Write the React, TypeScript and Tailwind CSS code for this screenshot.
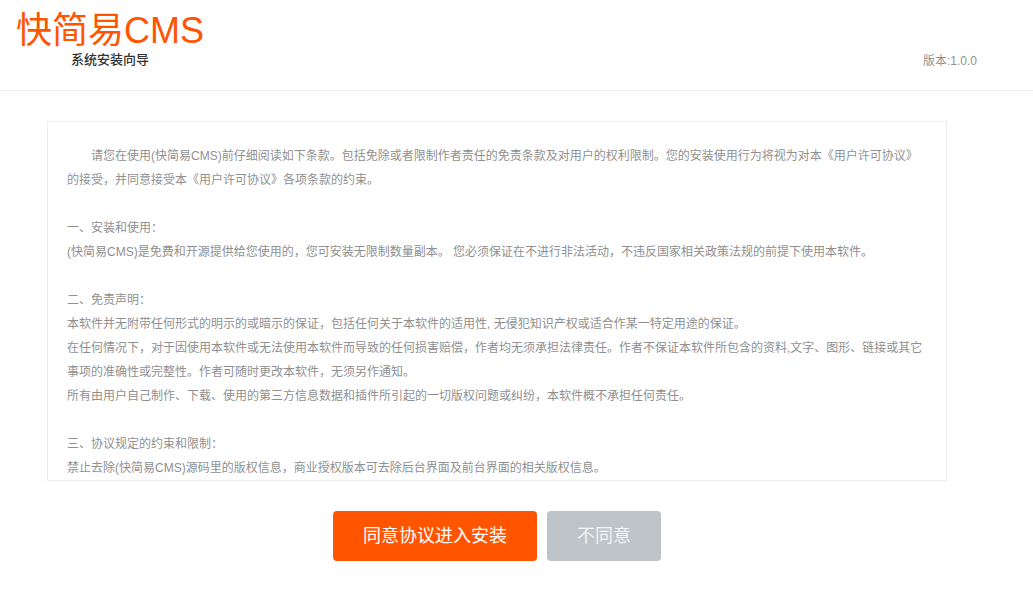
const fontStack = "font-['Liberation_Sans','Noto_Sans_CJK_SC',sans-serif]";

const agreement = [
  "请您在使用(快简易CMS)前仔细阅读如下条款。包括免除或者限制作者责任的免责条款及对用户的权利限制。您的安装使用行为将视为对本《用户许可协议》",
  "的接受，并同意接受本《用户许可协议》各项条款的约束。",
  "",
  "一、安装和使用：",
  "(快简易CMS)是免费和开源提供给您使用的，您可安装无限制数量副本。 您必须保证在不进行非法活动，不违反国家相关政策法规的前提下使用本软件。",
  "",
  "二、免责声明：",
  "本软件并无附带任何形式的明示的或暗示的保证，包括任何关于本软件的适用性, 无侵犯知识产权或适合作某一特定用途的保证。",
  "在任何情况下，对于因使用本软件或无法使用本软件而导致的任何损害赔偿，作者均无须承担法律责任。作者不保证本软件所包含的资料,文字、图形、链接或其它",
  "事项的准确性或完整性。作者可随时更改本软件，无须另作通知。",
  "所有由用户自己制作、下载、使用的第三方信息数据和插件所引起的一切版权问题或纠纷，本软件概不承担任何责任。",
  "",
  "三、协议规定的约束和限制：",
  "禁止去除(快简易CMS)源码里的版权信息，商业授权版本可去除后台界面及前台界面的相关版权信息。",
];

export default function App() {
  return (
    <div className={`min-h-[590px] bg-white ${fontStack}`}>
      {/* Header */}
      <header className="flex h-[91px] justify-between border-b border-[#eeeeee]">
        <div className="pl-[16px] pt-[9px]">
          <div className="text-[36px] leading-[43px] text-[#ff5500]">快简易CMS</div>
          <div className="pl-[55px] text-[13px] leading-[16px] font-medium text-[#333333]">系统安装向导</div>
        </div>
        <div className="pr-[56px] pt-[53px] text-[12px] leading-[16px] text-[#909090]">版本:1.0.0</div>
      </header>

      {/* Agreement */}
      <div className="mx-[47px] mt-[30px] h-[360px] w-[900px] overflow-hidden border border-[#eeeeee] px-[19px] pt-[22px] text-[12px] leading-[24px] text-[#909090]">
        {agreement.map((line, i) => (
          <div key={i} className={`h-[24px] whitespace-nowrap ${i === 0 ? "pl-[24px]" : ""}`}>
            {line}
          </div>
        ))}
      </div>

      {/* Buttons */}
      <div className="mt-[30px] flex gap-[10px] pl-[333px]">
        <button className="h-[50px] w-[204px] rounded-[4px] bg-[#ff5500] text-[18px] text-white">同意协议进入安装</button>
        <button className="h-[50px] w-[114px] rounded-[4px] bg-[#bdc3c7] text-[18px] text-white/80">不同意</button>
      </div>
    </div>
  );
}
